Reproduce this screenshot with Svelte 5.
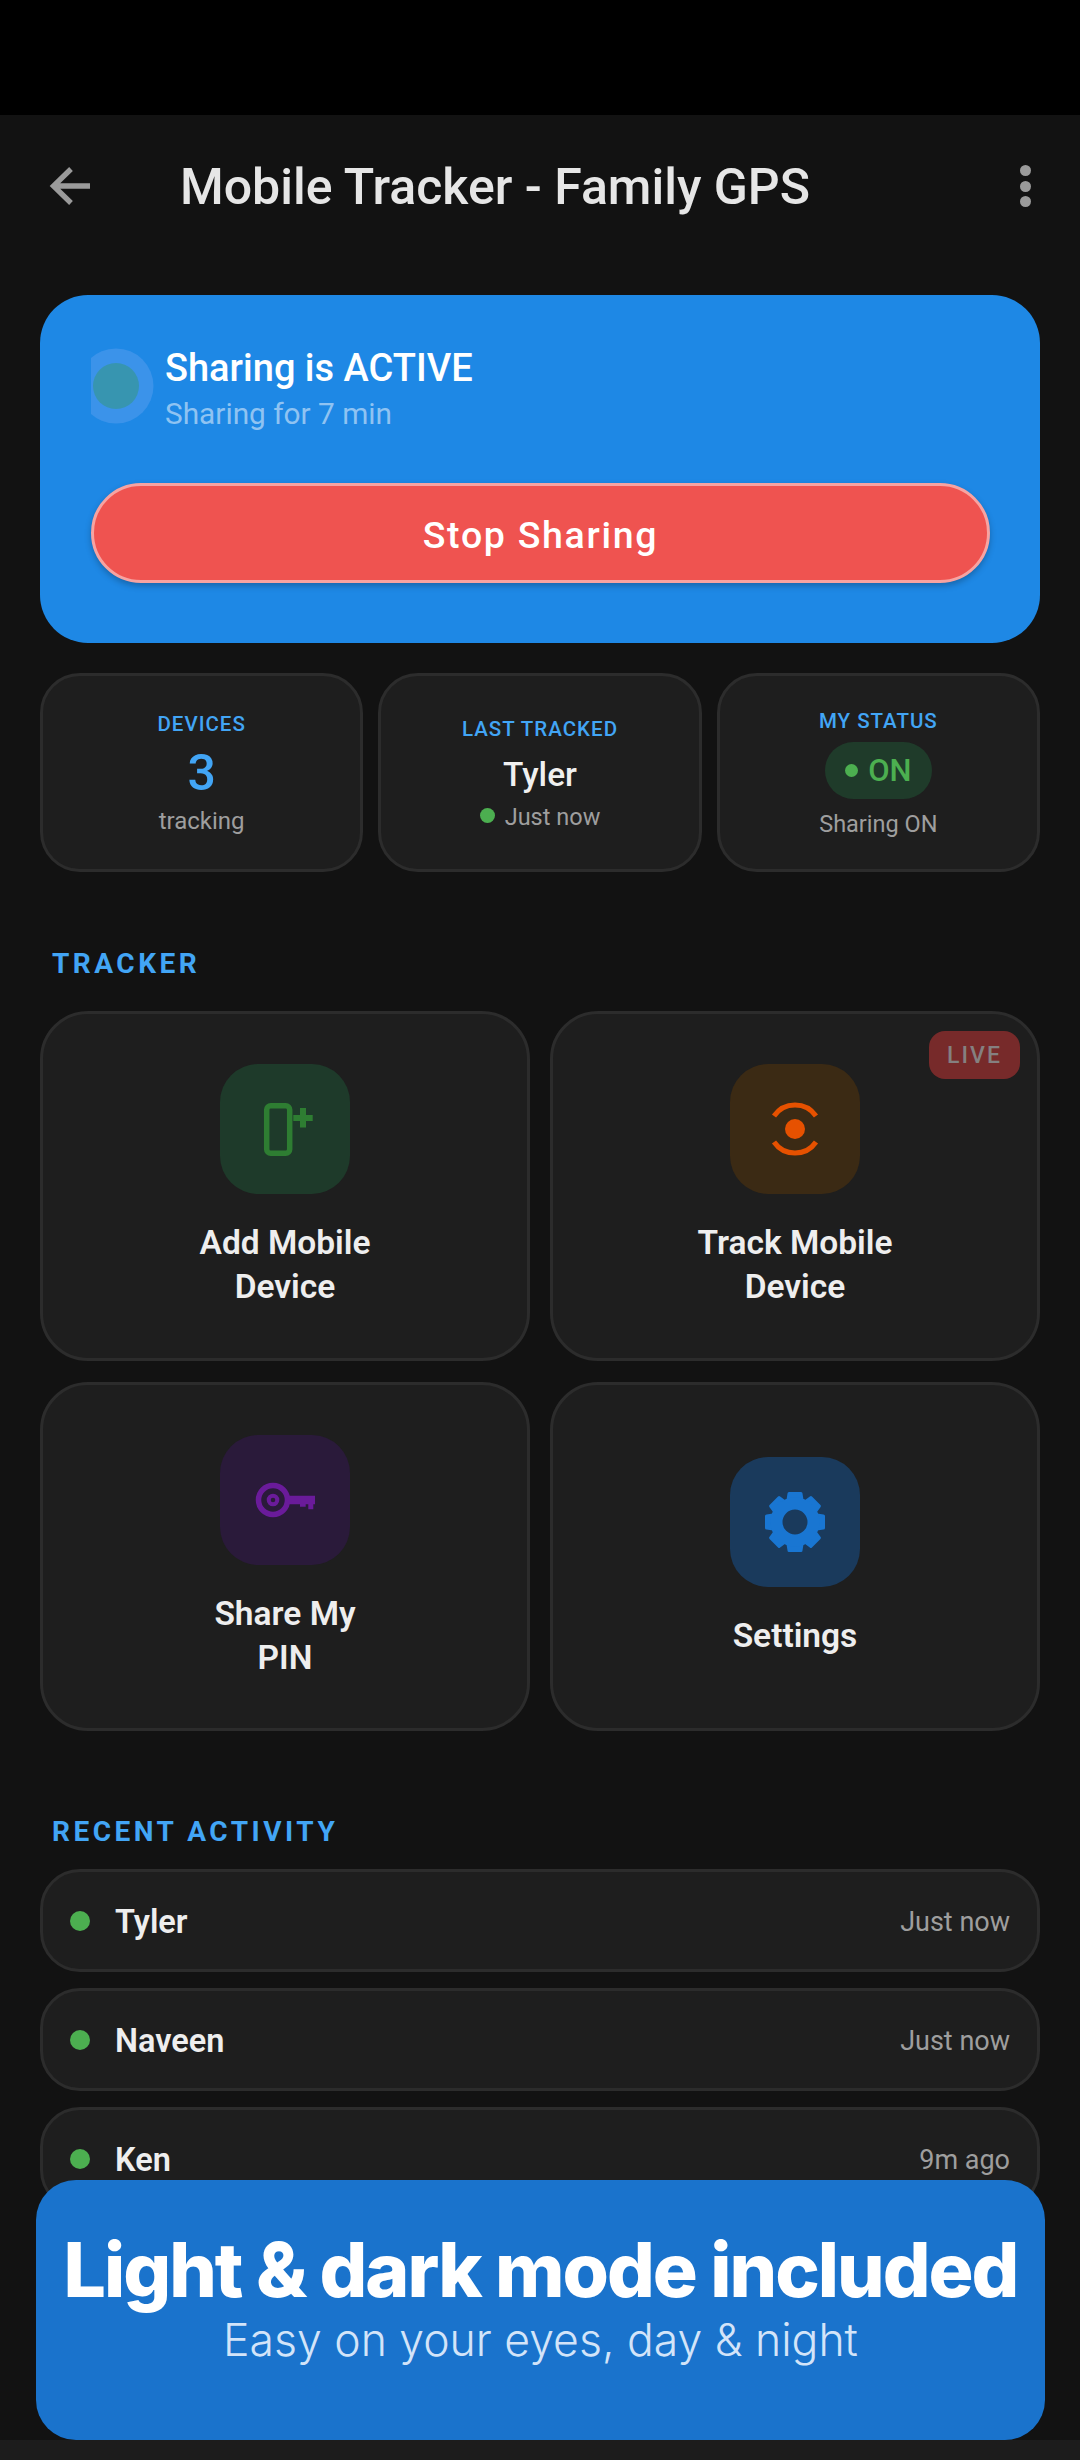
<script lang="ts">
	const activity = [
		{ name: 'Tyler', time: 'Just now' },
		{ name: 'Naveen', time: 'Just now' },
		{ name: 'Ken', time: '9m ago' }
	];
	const teeth = [0, 45, 90, 135, 180, 225, 270, 315];
</script>

<div class="screen">
	<div class="statusbar"></div>

	<header class="topbar">
		<svg class="back" viewBox="0 0 44 40" width="44" height="40" fill="none" stroke="#9a9a9a" stroke-width="5.300">
			<path d="M42 20H6M23 3 5.500 20 23 37" />
		</svg>
		<h1>Mobile Tracker - Family GPS</h1>
		<div class="dots"><i></i><i></i><i></i></div>
	</header>

	<main>
		<section class="hero">
			<div class="hero-head">
				<div class="pulse-clip"><div class="pulse"></div></div>
				<div>
					<div class="hero-title">Sharing is ACTIVE</div>
					<div class="hero-sub">Sharing for 7 min</div>
				</div>
			</div>
			<button class="stop">Stop Sharing</button>
		</section>

		<section class="stats">
			<div class="stat">
				<div class="stat-label">DEVICES</div>
				<div class="stat-num">3</div>
				<div class="stat-note">tracking</div>
			</div>
			<div class="stat">
				<div class="stat-label">LAST TRACKED</div>
				<div class="stat-name">Tyler</div>
				<div class="stat-live"><span class="dot small"></span>Just now</div>
			</div>
			<div class="stat tight">
				<div class="stat-label">MY STATUS</div>
				<div class="pill"><span class="pill-dot"></span>ON</div>
				<div class="stat-note">Sharing ON</div>
			</div>
		</section>

		<h2 class="first">TRACKER</h2>
		<section class="tiles">
			<div class="tile">
				<div class="icon green">
					<svg viewBox="0 0 70 70" width="70" height="70" fill="none" stroke="#2e7d32">
						<rect x="16.700" y="11.700" width="23" height="47.500" rx="4" stroke-width="5.500" />
						<path d="M43.300 24H62.700M53 14V33.500" stroke-width="6" />
					</svg>
				</div>
				<div class="tile-label">Add Mobile<br />Device</div>
			</div>
			<div class="tile">
				<span class="live">LIVE</span>
				<div class="icon orange">
					<svg viewBox="0 0 70 70" width="70" height="70" fill="none" stroke="#e65100" stroke-width="5">
						<path d="M14 22A25.500 25.500 0 0 1 56 22M14 48A25.500 25.500 0 0 0 56 48" />
						<circle cx="35" cy="35" r="10" fill="#e65100" stroke="none" />
					</svg>
				</div>
				<div class="tile-label">Track Mobile<br />Device</div>
			</div>
			<div class="tile">
				<div class="icon purple">
					<svg viewBox="0 0 70 70" width="70" height="70" fill="none" stroke="#6a1b9a">
						<circle cx="23" cy="35" r="14.500" stroke-width="5.500" />
						<circle cx="23" cy="35" r="4.300" stroke-width="4" />
						<path d="M38 30.700H65V39.300H63.300V44.300H58.300V39.300H55.700V41.700H50V39.300H38Z" fill="#6a1b9a" stroke="none" />
					</svg>
				</div>
				<div class="tile-label">Share My<br />PIN</div>
			</div>
			<div class="tile">
				<div class="icon blue">
					<svg viewBox="0 0 70 70" width="70" height="70" fill="none">
						{#each teeth as angle}
							<path d="M27.500 6.500Q27.500 5 29 5H41Q42.500 5 42.500 6.500L44 16H26Z" fill="#1976d2" transform="rotate({angle} 35 35)" />
						{/each}
						<circle cx="35" cy="35" r="18.500" stroke="#1976d2" stroke-width="12" />
					</svg>
				</div>
				<div class="tile-label">Settings</div>
			</div>
		</section>

		<h2 class="second">RECENT ACTIVITY</h2>
		<section class="rows">
			{#each activity as row (row.name)}
				<div class="row">
					<span class="dot"></span>
					<span class="row-name">{row.name}</span>
					<span class="row-time">{row.time}</span>
				</div>
			{/each}
		</section>
	</main>

	<div class="navstrip"></div>

	<div class="promo">
		<div class="promo-title">Light &amp; dark mode included</div>
		<div class="promo-sub">Easy on your eyes, day &amp; night</div>
	</div>
</div>

<style>
	:global(body) {
		background: #121212;
	}

	.screen {
		position: relative;
		width: 1080px;
		height: 2460px;
		overflow: hidden;
		display: flex;
		flex-direction: column;
		background: #121212;
		font-family: Roboto, 'Noto Sans', sans-serif;
		color: #fff;
	}

	.statusbar {
		height: 115px;
		flex: none;
		background: #000;
	}

	.topbar {
		height: 144px;
		flex: none;
		display: flex;
		align-items: center;
		padding: 0 49px 0 48px;
	}
	.back {
		flex: none;
		margin-top: -3px;
	}
	h1 {
		flex: 1;
		margin: 0 0 0 88px;
		font-size: 50px;
		font-weight: 500;
		color: #e6e6e6;
	}
	.dots {
		display: flex;
		flex-direction: column;
		gap: 4.500px;
		margin-top: -2px;
	}
	.dots i {
		width: 11px;
		height: 11px;
		border-radius: 50%;
		background: #9a9a9a;
	}

	main {
		flex: 1;
		min-height: 0;
		padding: 36px 40px 0;
		overflow: hidden;
	}

	.hero {
		height: 348px;
		box-sizing: border-box;
		padding: 51px 50px 0 51px;
		border-radius: 48px;
		background: #1e88e5;
	}
	.hero-head {
		display: flex;
		align-items: center;
		height: 86px;
	}
	.pulse-clip {
		width: 74px;
		height: 80px;
		margin-bottom: 6px;
		overflow: hidden;
		flex: none;
	}
	.pulse {
		width: 46px;
		height: 46px;
		margin: 17px 0 0 1.500px;
		border-radius: 50%;
		background: #3795b0;
		box-shadow: 0 0 0 14.500px #3b93ea;
	}
	.hero-title {
		font-size: 38px;
		line-height: 44px;
		font-weight: 500;
	}
	.hero-sub {
		margin-top: 6px;
		font-size: 29.800px;
		line-height: 36px;
		color: #8fc3f2;
	}
	.stop {
		display: block;
		width: 100%;
		height: 100px;
		margin-top: 51px;
		padding: 3px 0 0;
		border: 3px solid #f7a3a1;
		border-radius: 50px;
		background: #ef5350;
		color: #fff;
		font: 500 37.500px Roboto, sans-serif;
		letter-spacing: 1.700px;
		box-shadow: 0 3px 6px rgba(0, 0, 0, 0.25);
	}

	.stats {
		display: grid;
		grid-template-columns: repeat(3, 1fr);
		gap: 15px;
		margin-top: 30px;
	}
	.stat {
		height: 199px;
		box-sizing: border-box;
		display: flex;
		flex-direction: column;
		align-items: center;
		justify-content: center;
		border: 3px solid #2c2c2c;
		border-radius: 40px;
		background: #1e1e1e;
	}
	.stat-label {
		margin-top: 2px;
		font-size: 20.500px;
		line-height: 26px;
		font-weight: 500;
		letter-spacing: 1px;
		color: #42a5f5;
	}
	.stat-num {
		margin-top: 7px;
		font-size: 50px;
		line-height: 58px;
		font-weight: 500;
		color: #42a5f5;
	}
	.stat-note {
		margin-top: 4px;
		font-size: 24px;
		line-height: 30px;
		color: #9e9e9e;
	}
	.stat-name {
		margin-top: 12px;
		font-size: 33.500px;
		line-height: 42px;
		font-weight: 500;
		color: #f0f0f0;
	}
	.stat-live {
		display: flex;
		align-items: center;
		gap: 10px;
		margin-top: 7px;
		font-size: 23.500px;
		line-height: 28px;
		color: #9e9e9e;
	}
	.pill {
		display: flex;
		align-items: center;
		justify-content: center;
		gap: 10px;
		width: 107px;
		height: 57px;
		margin-top: 8px;
		border-radius: 29px;
		background: #1f3b2a;
		color: #4caf50;
		font-size: 31px;
		font-weight: 500;
	}
	.pill-dot {
		width: 13px;
		height: 13px;
		border-radius: 50%;
		background: #4caf50;
	}
	.stat.tight .stat-note {
		margin-top: 10px;
		font-size: 23.500px;
	}

	h2 {
		margin: 0;
		font-size: 28px;
		line-height: 30px;
		font-weight: 700;
		letter-spacing: 3.500px;
		color: #42a5f5;
		padding-left: 12px;
	}
	h2.first {
		margin: 77px 0 32px;
	}
	h2.second {
		margin: 86px 0 22px;
	}

	.tiles {
		display: grid;
		grid-template-columns: repeat(2, 1fr);
		gap: 21px 20px;
	}
	.tile {
		position: relative;
		height: 349.500px;
		box-sizing: border-box;
		padding-top: 2px;
		display: flex;
		flex-direction: column;
		align-items: center;
		justify-content: center;
		gap: 27px;
		border: 3px solid #2c2c2c;
		border-radius: 48px;
		background: #1e1e1e;
	}
	.icon {
		width: 130px;
		height: 130px;
		border-radius: 38px;
		display: flex;
		align-items: center;
		justify-content: center;
	}
	.icon.green {
		background: #1e3a2a;
	}
	.icon.orange {
		background: #3b2a14;
	}
	.icon.purple {
		background: #2a1a3a;
	}
	.icon.blue {
		background: #1a3a5c;
	}
	.tile-label {
		font-size: 33.500px;
		line-height: 44px;
		font-weight: 600;
		text-align: center;
		color: #eeeeee;
	}
	.live {
		position: absolute;
		top: 17px;
		right: 17px;
		width: 91px;
		height: 48px;
		display: flex;
		align-items: center;
		justify-content: center;
		border-radius: 16px;
		background: #772a2a;
		color: #858080;
		font-size: 23px;
		font-weight: 500;
		letter-spacing: 2px;
	}

	.rows {
		display: flex;
		flex-direction: column;
		gap: 16px;
	}
	.row {
		height: 103px;
		box-sizing: border-box;
		flex: none;
		display: flex;
		align-items: center;
		padding: 0 27px;
		border: 3px solid #2c2c2c;
		border-radius: 40px;
		background: #1e1e1e;
	}
	.dot {
		width: 20px;
		height: 20px;
		flex: none;
		margin: 0 25px 0 0;
		border-radius: 50%;
		background: #4caf50;
	}
	.dot.small {
		width: 15px;
		height: 15px;
		margin: -3px 0 0;
	}
	.row-name {
		flex: 1;
		margin-top: 2px;
		font-size: 32.500px;
		font-weight: 600;
		color: #eeeeee;
	}
	.row-time {
		margin-top: 2px;
		font-size: 27px;
		color: #9e9e9e;
	}

	.navstrip {
		height: 20px;
		flex: none;
		background: #1c1c1c;
	}

	.promo {
		position: absolute;
		left: 36px;
		top: 2180px;
		width: 1009px;
		height: 260px;
		box-sizing: border-box;
		padding-top: 48px;
		border-radius: 40px;
		background: #1a73cc;
		text-align: center;
		font-family: Inter, sans-serif;
	}
	.promo-title {
		font-size: 75px;
		line-height: 84px;
		font-weight: 800;
		letter-spacing: -2px;
		white-space: nowrap;
	}
	.promo-sub {
		font-size: 44.500px;
		line-height: 56px;
		font-weight: 300;
		color: #d3e4f9;
	}
</style>
